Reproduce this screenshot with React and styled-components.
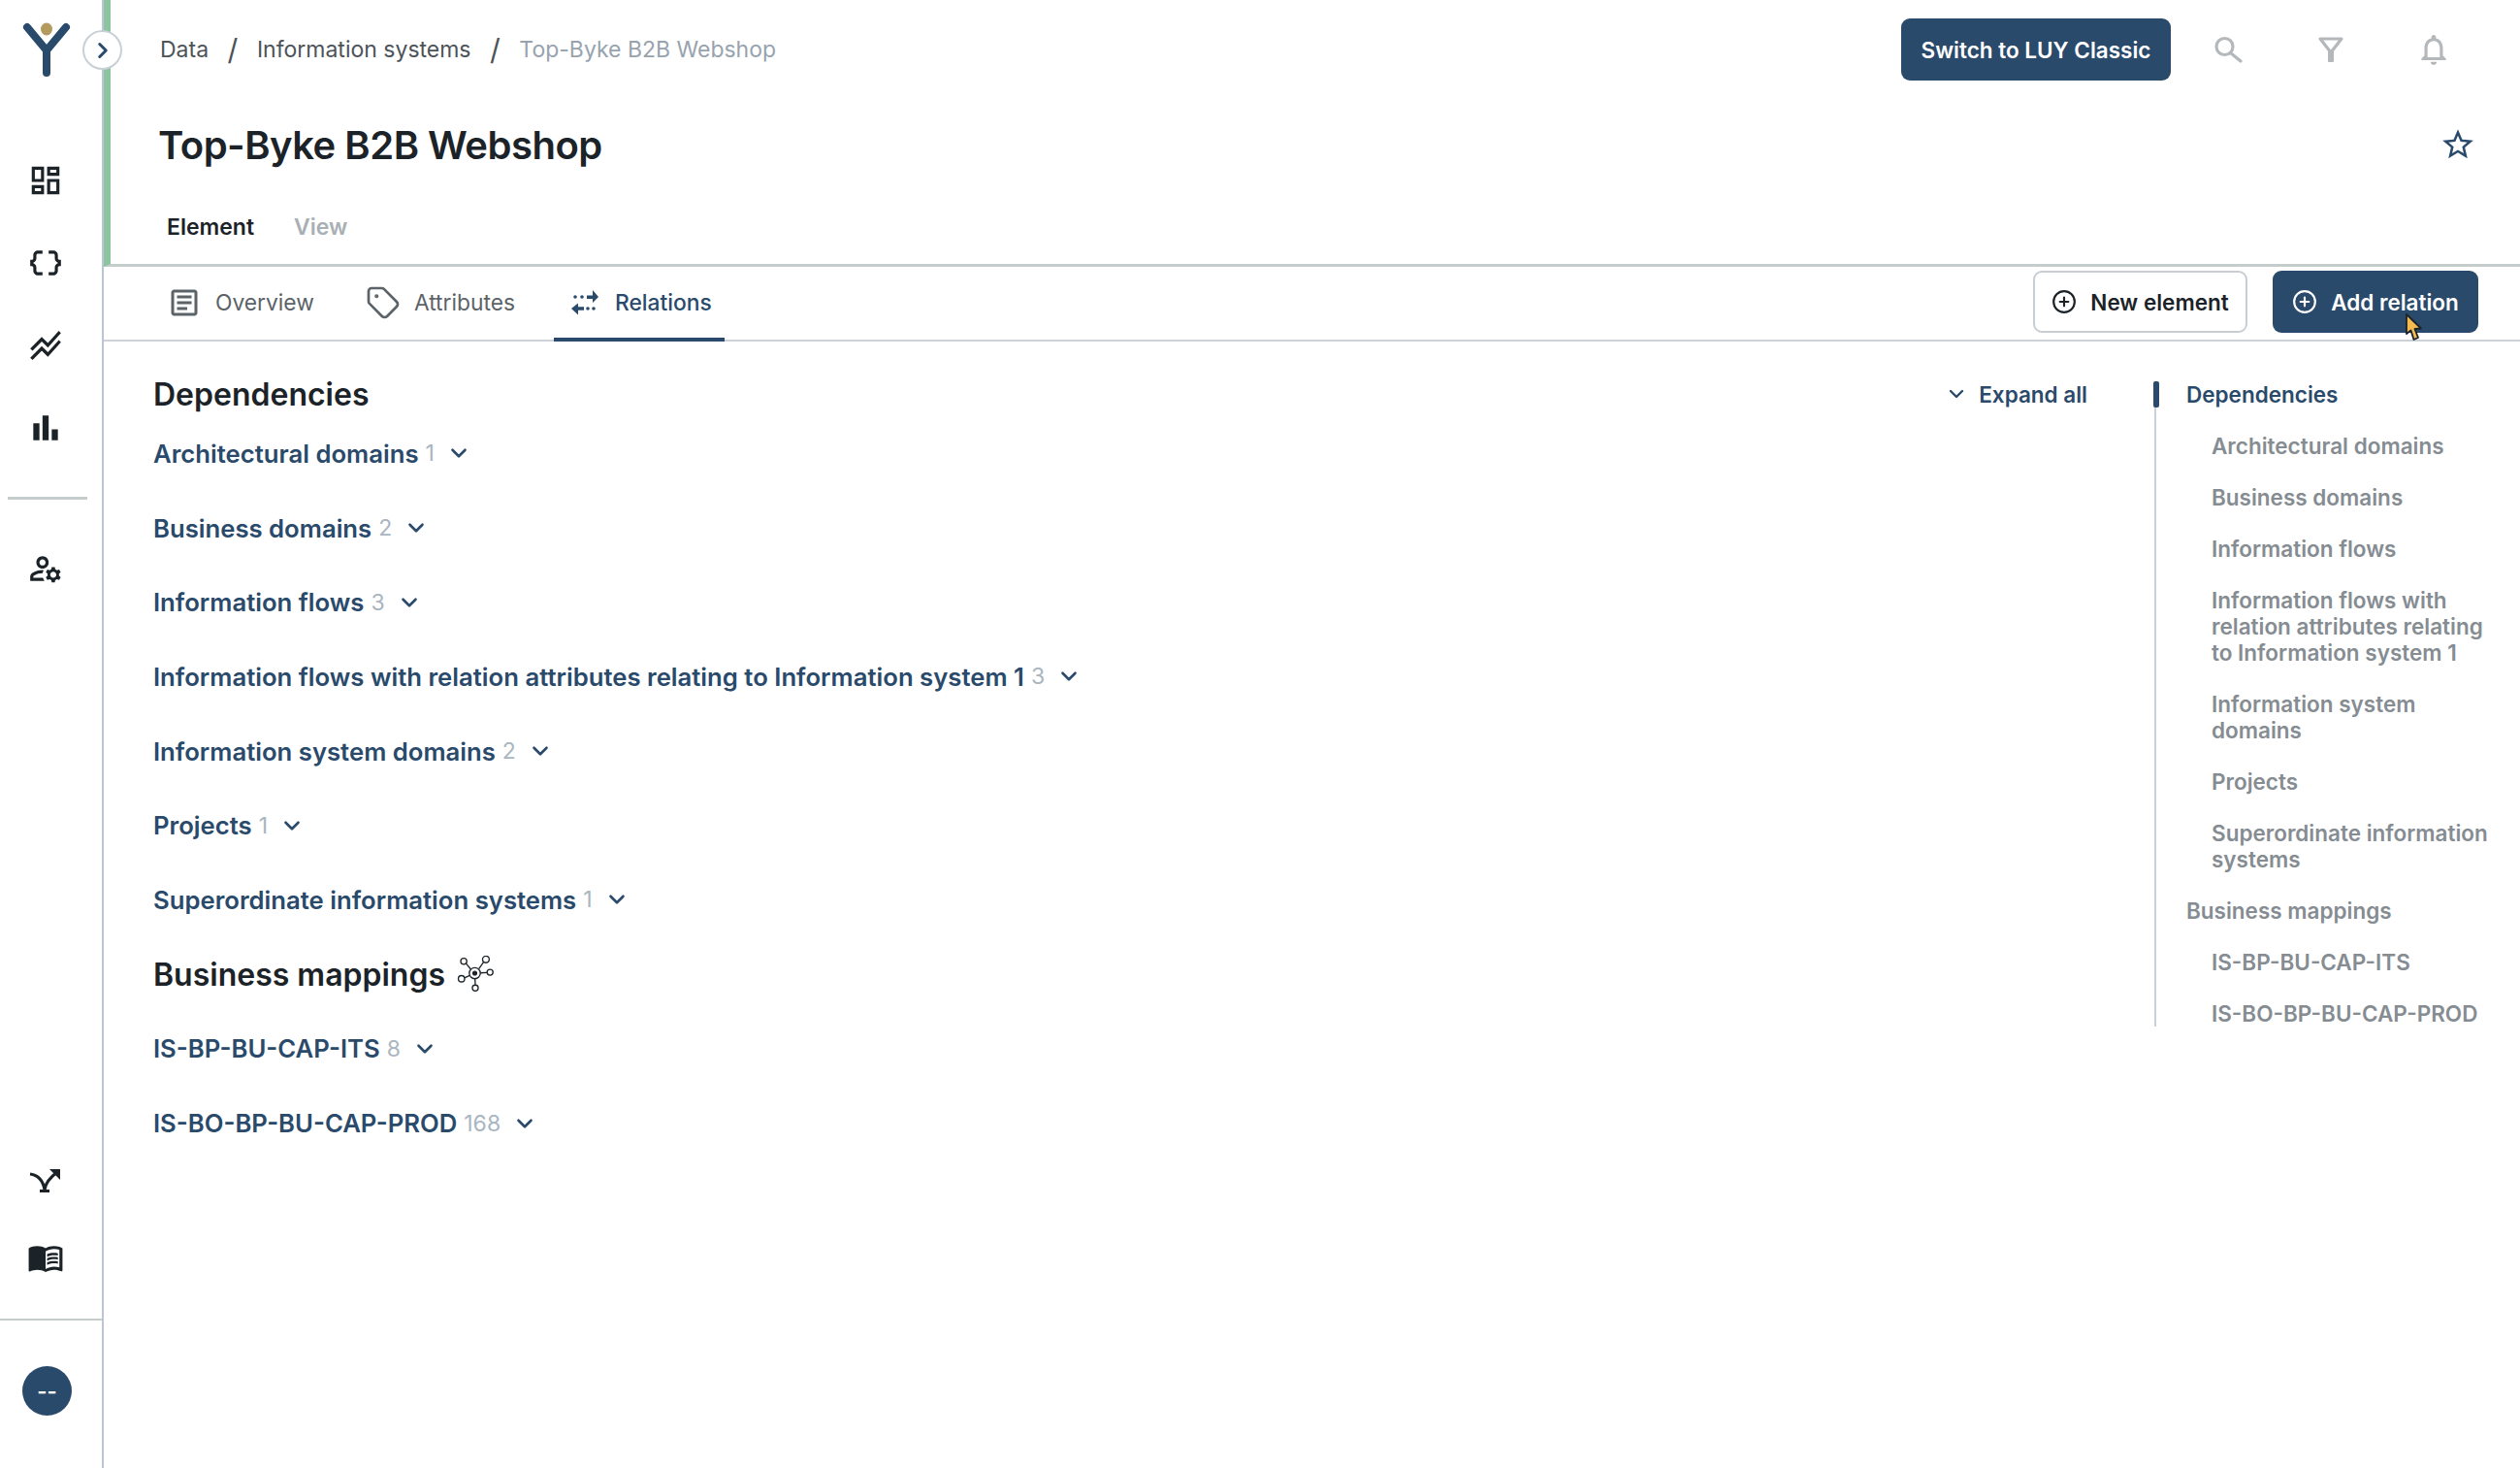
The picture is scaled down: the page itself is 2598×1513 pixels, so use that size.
import React from "react";
import styled, { createGlobalStyle } from "styled-components";
import {
  MdOutlineDashboard,
  MdDataObject,
  MdStackedLineChart,
  MdBarChart,
  MdOutlineManageAccounts,
  MdMenuBook,
  MdOutlineArticle,
  MdOutlineNotifications,
  MdStarBorder,
} from "react-icons/md";
import { LuChevronDown, LuChevronRight, LuCirclePlus, LuTag } from "react-icons/lu";

const navy = "#2a4a6b";

const dependencies = [
  { name: "Architectural domains", count: 1 },
  { name: "Business domains", count: 2 },
  { name: "Information flows", count: 3 },
  { name: "Information flows with relation attributes relating to Information system 1", count: 3 },
  { name: "Information system domains", count: 2 },
  { name: "Projects", count: 1 },
  { name: "Superordinate information systems", count: 1 },
];

const mappings = [
  { name: "IS-BP-BU-CAP-ITS", count: 8 },
  { name: "IS-BO-BP-BU-CAP-PROD", count: 168 },
];

const Logo = () => (
  <svg width="52" height="58" viewBox="0 0 52 58">
    <path d="M6 6 L26 30 L46 6 M26 30 V53" fill="none" stroke={navy} strokeWidth="8" strokeLinecap="round" strokeLinejoin="round" />
    <ellipse cx="26" cy="8" rx="6" ry="6.500" fill="#b49a5e" />
  </svg>
);

const MergeIcon = () => (
  <svg width="34" height="26" viewBox="0 0 34 26">
    <path d="M1 6 C8 7 14 11 16 22 M16 22 C17 15 21 10 29 4" fill="none" stroke="#1c2328" strokeWidth="3.200" />
    <path d="M21 1 H32 V12 Z" fill="#1c2328" />
    <path d="M11 22 H21 V25 H11 Z" fill="#1c2328" />
  </svg>
);

const RelationsIcon = () => (
  <svg width="30" height="33" viewBox="0 0 30 33" fill={navy}>
    <path d="M17 9.500 H23 V4 L29 11 L23 17 V13 H17 Z" />
    <path d="M14 21.300 H8 V17.500 L1 23 L8 29.500 V24.700 H14 Z" />
    <circle cx="5" cy="11" r="1.800" />
    <circle cx="12" cy="11" r="1.800" />
    <circle cx="18" cy="23" r="1.800" />
    <circle cx="24" cy="23" r="1.800" />
  </svg>
);

const SearchIcon = () => (
  <svg width="30" height="30" viewBox="0 0 30 30" fill="none" stroke="#b4b8bb" strokeWidth="3.200" strokeLinecap="round">
    <circle cx="11.500" cy="12" r="8.500" />
    <path d="M17.500 18.500 L28 27" />
  </svg>
);

const FilterIcon = () => (
  <svg width="28" height="28" viewBox="0 0 28 28" fill="#b4b8bb">
    <path d="M3 3 H25 L14 17 Z" fill="none" stroke="#b4b8bb" strokeWidth="3.200" strokeLinejoin="round" />
    <rect x="11" y="14" width="6" height="13" rx="1" />
  </svg>
);

const HubIcon = () => (
  <svg width="38" height="38" viewBox="0 0 40 40" fill="none" stroke="#1c2328" strokeWidth="1.400">
    <circle cx="19.500" cy="19" r="6" />
    <circle cx="19.500" cy="19" r="2" fill="#1c2328" />
    <circle cx="7.500" cy="6" r="3.300" />
    <circle cx="31.500" cy="4" r="3.600" />
    <circle cx="36" cy="18" r="3.200" />
    <circle cx="5" cy="25" r="3.400" />
    <circle cx="20" cy="35" r="3.200" />
    <path d="M10 8.500 L15 14.500 M29 7 L24 14 M32.800 18.300 L25.500 18.700 M8.200 24 L14 21.500 M20 31.800 L19.700 25" />
  </svg>
);

const CursorIcon = () => (
  <svg width="20" height="30" viewBox="0 0 20 30">
    <path d="M3 1 L3 21 L7.500 17.500 L10.500 27 L15 25 L11.500 16 L18 15.500 Z" fill="#f3bc51" stroke="#1c2328" strokeWidth="1.800" strokeLinejoin="round" />
  </svg>
);

const App = () => {
  return (
    <>
      <GlobalStyle />
      <Page>
        <Sidebar>
          <LogoBox>
            <Logo />
          </LogoBox>
          <NavIcons>
            <MdOutlineDashboard size={38} />
            <MdDataObject size={38} />
            <MdStackedLineChart size={38} />
            <MdBarChart size={38} />
          </NavIcons>
          <SideDivider />
          <AdminIcon>
            <MdOutlineManageAccounts size={38} />
          </AdminIcon>
          <SideBottom>
            <BottomIcon>
              <MergeIcon />
            </BottomIcon>
            <BottomIcon>
              <MdMenuBook size={38} />
            </BottomIcon>
            <AvatarRow>
              <Avatar>--</Avatar>
            </AvatarRow>
          </SideBottom>
          <ExpandButton>
            <LuChevronRight size={26} strokeWidth={2.8} />
          </ExpandButton>
        </Sidebar>
        <Main>
          <Header>
            <TopBar>
              <Breadcrumb>
                <Crumb>Data</Crumb>
                <Slash>/</Slash>
                <Crumb>Information systems</Crumb>
                <Slash>/</Slash>
                <Crumb $current>Top-Byke B2B Webshop</Crumb>
              </Breadcrumb>
              <TopActions>
                <PrimaryButton $wide>Switch to LUY Classic</PrimaryButton>
                <GreyIcon>
                  <SearchIcon />
                </GreyIcon>
                <GreyIcon>
                  <FilterIcon />
                </GreyIcon>
                <GreyIcon>
                  <MdOutlineNotifications size={38} />
                </GreyIcon>
              </TopActions>
            </TopBar>
            <TitleRow>
              <Title>Top-Byke B2B Webshop</Title>
              <StarButton>
                <MdStarBorder size={38} />
              </StarButton>
            </TitleRow>
            <SubTabs>
              <SubTab $active>Element</SubTab>
              <SubTab>View</SubTab>
            </SubTabs>
          </Header>
          <TabBar>
            <Tabs>
              <Tab>
                <MdOutlineArticle size={36} />
                Overview
              </Tab>
              <Tab>
                <LuTag size={36} strokeWidth={1.8} />
                Attributes
              </Tab>
              <Tab $active>
                <RelationsIcon />
                Relations
              </Tab>
            </Tabs>
            <TabActions>
              <OutlineButton>
                <LuCirclePlus size={26} strokeWidth={2} />
                New element
              </OutlineButton>
              <PrimaryButton>
                <LuCirclePlus size={26} strokeWidth={2} />
                Add relation
                <CursorSpot>
                  <CursorIcon />
                </CursorSpot>
              </PrimaryButton>
            </TabActions>
          </TabBar>
          <Body>
            <Content>
              <HeadingRow $first>
                <Heading>Dependencies</Heading>
                <ExpandAll>
                  <LuChevronDown size={24} strokeWidth={2.4} />
                  Expand all
                </ExpandAll>
              </HeadingRow>
              {dependencies.map((item) => (
                <Group key={item.name}>
                  <GroupName>{item.name}</GroupName>
                  <Count>{item.count}</Count>
                  <GroupChevron size={26} strokeWidth={2.4} />
                </Group>
              ))}
              <HeadingRow>
                <Heading>Business mappings</Heading>
                <HubIcon />
              </HeadingRow>
              {mappings.map((item) => (
                <Group key={item.name}>
                  <GroupName>{item.name}</GroupName>
                  <Count>{item.count}</Count>
                  <GroupChevron size={26} strokeWidth={2.4} />
                </Group>
              ))}
            </Content>
            <Toc>
              <TocMarker />
              <TocItem $active>Dependencies</TocItem>
              {dependencies.map((item) => (
                <TocItem key={item.name} $sub>
                  {item.name}
                </TocItem>
              ))}
              <TocItem>Business mappings</TocItem>
              {mappings.map((item) => (
                <TocItem key={item.name} $sub>
                  {item.name}
                </TocItem>
              ))}
            </Toc>
          </Body>
        </Main>
      </Page>
    </>
  );
};

const GlobalStyle = createGlobalStyle`
  * {
    box-sizing: border-box;
  }
  body {
    margin: 0;
    background: #fff;
    font-family: Inter, "Liberation Sans", sans-serif;
    color: #1c2328;
  }
`;

const Page = styled.div`
  display: flex;
  height: 1513px;
  overflow: hidden;
`;

const Sidebar = styled.aside`
  position: relative;
  flex: 0 0 107px;
  display: flex;
  flex-direction: column;
  border-right: 2px solid #bcc6d2;
`;

const LogoBox = styled.div`
  height: 167px;
  padding: 22px 0 0 22px;
`;

const NavIcons = styled.nav`
  display: flex;
  flex-direction: column;
  align-items: center;
  gap: 47px;
  width: 94px;
  color: #1c2328;
`;

const SideDivider = styled.div`
  height: 3px;
  width: 82px;
  margin: 52px 0 0 8px;
  background: #c5cccc;
`;

const AdminIcon = styled.div`
  display: flex;
  justify-content: center;
  width: 94px;
  margin-top: 52px;
  color: #1c2328;
`;

const SideBottom = styled.div`
  margin-top: auto;
  display: flex;
  flex-direction: column;
`;

const BottomIcon = styled.div`
  display: flex;
  justify-content: center;
  align-items: center;
  width: 94px;
  height: 79px;
  color: #1c2328;
`;

const AvatarRow = styled.div`
  margin-top: 24px;
  height: 154px;
  padding: 47px 0 0 23px;
  border-top: 2px solid #c5cccc;
`;

const Avatar = styled.div`
  width: 51px;
  height: 51px;
  border-radius: 50%;
  background: ${navy};
  color: #fff;
  font-size: 22px;
  font-weight: 600;
  display: flex;
  align-items: center;
  justify-content: center;
`;

const ExpandButton = styled.button`
  position: absolute;
  top: 31px;
  left: 85px;
  width: 41px;
  height: 41px;
  padding: 0;
  border: 2px solid #c8d0d6;
  border-radius: 50%;
  background: #fff;
  color: ${navy};
  display: flex;
  align-items: center;
  justify-content: center;
  z-index: 2;
`;

const Main = styled.main`
  flex: 1;
  min-width: 0;
  display: flex;
  flex-direction: column;
`;

const Header = styled.header`
  height: 275px;
  border-left: 7px solid #8cc4a0;
  border-bottom: 3px solid #c5cccc;
  padding: 19px 45px 0 49px;
`;

const TopBar = styled.div`
  display: flex;
  justify-content: space-between;
  align-items: center;
  height: 64px;
`;

const Breadcrumb = styled.div`
  display: flex;
  align-items: center;
  gap: 19.500px;
  margin-left: 2px;
  font-size: 23px;
`;

const Crumb = styled.span`
  color: ${(p) => (p.$current ? "#97a3ae" : "#4c5359")};
`;

const Slash = styled.span`
  color: #4c5359;
  font-size: 30px;
`;

const TopActions = styled.div`
  display: flex;
  align-items: center;
  margin-right: -9px;
`;

const GreyIcon = styled.div`
  display: flex;
  justify-content: center;
  align-items: center;
  width: 106px;
  color: #b4b8bb;
  &:first-of-type {
    margin-left: 6px;
  }
`;

const TitleRow = styled.div`
  display: flex;
  justify-content: space-between;
  align-items: center;
  margin-top: 34px;
  height: 64px;
`;

const Title = styled.h1`
  margin: 0;
  font-size: 40px;
  font-weight: 600;
  letter-spacing: -0.5px;
  color: #1c2328;
`;

const StarButton = styled.div`
  display: flex;
  color: ${navy};
`;

const SubTabs = styled.div`
  display: flex;
  gap: 41px;
  margin-top: 39px;
  padding-left: 9px;
`;

const SubTab = styled.span`
  font-size: 23px;
  font-weight: 600;
  color: ${(p) => (p.$active ? "#1c2328" : "#a9b0b5")};
`;

const TabBar = styled.div`
  display: flex;
  justify-content: space-between;
  align-items: center;
  height: 77px;
  border-bottom: 2px solid #ccd2d8;
  padding: 0 43px 3px 50px;
`;

const Tabs = styled.div`
  display: flex;
  align-self: stretch;
  gap: 25px;
  margin-bottom: -5px;
`;

const Tab = styled.div`
  display: flex;
  align-items: center;
  gap: ${(p) => (p.$active ? "16px" : "14px")};
  padding: 0 13px 0 ${(p) => (p.$active ? "17px" : "15px")};
  margin-left: ${(p) => (p.$active ? "2px" : "0")};
  font-size: 22.800px;
  color: ${(p) => (p.$active ? navy : "#5c6368")};
  font-weight: ${(p) => (p.$active ? 500 : 400)};
  border-bottom: 4px solid ${(p) => (p.$active ? navy : "transparent")};
`;

const TabActions = styled.div`
  display: flex;
  gap: 26px;
`;

const PrimaryButton = styled.button`
  position: relative;
  display: flex;
  align-items: center;
  justify-content: center;
  gap: 14px;
  height: 64px;
  width: ${(p) => (p.$wide ? "278px" : "212px")};
  border: 0;
  border-radius: 9px;
  background: ${navy};
  color: #fff;
  font-family: inherit;
  font-size: 22.500px;
  font-weight: 600;
`;

const OutlineButton = styled(PrimaryButton)`
  width: 221px;
  background: #fff;
  color: #1c2328;
  border: 2px solid #c8ced4;
`;

const CursorSpot = styled.span`
  position: absolute;
  left: 135px;
  top: 44px;
  display: flex;
`;

const Body = styled.div`
  flex: 1;
  display: flex;
  padding-left: 51px;
`;

const Content = styled.section`
  flex: 1;
  min-width: 0;
  padding: 31px 0 0 0;
`;

const HeadingRow = styled.div`
  display: flex;
  align-items: center;
  gap: 12px;
  position: relative;
  height: ${(p) => (p.$first ? "46px" : "76.700px")};
`;

const Heading = styled.h2`
  margin: 0;
  font-size: 32px;
  font-weight: 600;
  color: #1c2328;
`;

const ExpandAll = styled.div`
  margin-left: auto;
  margin-right: 69px;
  display: flex;
  align-items: center;
  gap: 11px;
  font-size: 22.500px;
  font-weight: 600;
  color: ${navy};
`;

const Group = styled.div`
  display: flex;
  align-items: center;
  height: 76.700px;
  font-size: 25.700px;
`;

const GroupName = styled.span`
  font-weight: 600;
  color: ${navy};
`;

const Count = styled.span`
  margin-left: 7px;
  font-size: 23px;
  color: #a9b5c0;
`;

const GroupChevron = styled(LuChevronDown)`
  margin-left: 12px;
  color: ${navy};
`;

const Toc = styled.nav`
  position: relative;
  align-self: flex-start;
  flex: 0 0 377px;
  margin-top: 41px;
  padding: 0 28px 0 31px;
  border-left: 2px solid #c8d2dc;
  display: flex;
  flex-direction: column;
  gap: 26px;
`;

const TocMarker = styled.span`
  position: absolute;
  left: -3px;
  top: 0;
  width: 6px;
  height: 27px;
  border-radius: 2px;
  background: ${navy};
`;

const TocItem = styled.a`
  display: block;
  padding-left: ${(p) => (p.$sub ? "26px" : "0")};
  font-size: 22.500px;
  line-height: 27px;
  font-weight: 600;
  color: ${(p) => (p.$active ? navy : "#858c92")};
`;

export default App;
